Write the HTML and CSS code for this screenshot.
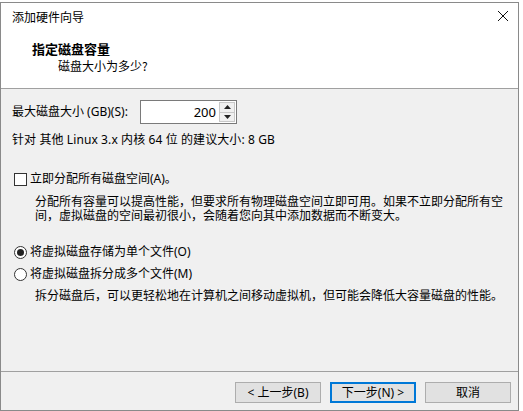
FILE: index.html
```html
<!DOCTYPE html>
<html lang="zh-CN">
<head>
<meta charset="utf-8">
<title>添加硬件向导</title>
<link rel="stylesheet" href="styles.css">
</head>
<body>
<div class="screen">
  <div class="dialog">
    <div class="top">
      <div class="titlebar">
        <span class="title">添加硬件向导</span>
        <svg class="close" width="12" height="12" viewBox="0 0 12 12"><path d="M1 1L11 11M11 1L1 11" stroke="#111" stroke-width="1" fill="none"/></svg>
      </div>
      <div class="header">
        <div class="h-title">指定磁盘容量</div>
        <div class="h-sub">磁盘大小为多少?</div>
      </div>
    </div>
    <div class="body">
      <div class="size-row">
        <span class="label">最大磁盘大小 (GB)(S):</span>
        <div class="spin">
          <span class="spin-value">200</span>
          <div class="spin-btns">
            <div class="spin-btn"><svg width="7" height="4" viewBox="0 0 7 4"><path d="M3.5 0L7 4H0Z" fill="#222"/></svg></div>
            <div class="spin-btn"><svg width="7" height="4" viewBox="0 0 7 4"><path d="M0 0H7L3.5 4Z" fill="#222"/></svg></div>
          </div>
        </div>
      </div>
      <div class="rec">针对 其他 Linux 3.x 内核 64 位 的建议大小: 8 GB</div>
      <div class="check-row">
        <span class="checkbox"></span>
        <span class="opt-label">立即分配所有磁盘空间(A)。</span>
      </div>
      <div class="desc desc-alloc">分配所有容量可以提高性能，但要求所有物理磁盘空间立即可用。如果不立即分配所有空<br>间，虚拟磁盘的空间最初很小，会随着您向其中添加数据而不断变大。</div>
      <div class="radio-row radio-first">
        <span class="radio checked"></span>
        <span class="opt-label">将虚拟磁盘存储为单个文件(O)</span>
      </div>
      <div class="radio-row radio-second">
        <span class="radio"></span>
        <span class="opt-label">将虚拟磁盘拆分成多个文件(M)</span>
      </div>
      <div class="desc desc-split">拆分磁盘后，可以更轻松地在计算机之间移动虚拟机，但可能会降低大容量磁盘的性能。</div>
    </div>
    <div class="footer">
      <button class="btn">&lt; 上一步(B)</button>
      <button class="btn btn-default">下一步(N) &gt;</button>
      <button class="btn btn-cancel">取消</button>
    </div>
  </div>
</div>
</body>
</html>
```
FILE: styles.css
```css
* { box-sizing: border-box; }
html, body {
  margin: 0;
  padding: 0;
  background: #ffffff;
}
body {
  width: 523px;
  height: 411px;
  overflow: hidden;
  font-family: "Noto Sans", "Noto Sans CJK SC", sans-serif;
  font-size: 12px;
  color: #000;
}
.screen {
  padding-top: 2px;
}
.dialog {
  width: 519px;
  height: 409px;
  border: 1px solid #8a8a8a;
  background: #f0f0f0;
  display: flex;
  flex-direction: column;
}
.top {
  background: #ffffff;
  height: 86px;
  border-bottom: 1px solid #a0a0a0;
  flex: none;
}
.titlebar {
  height: 28px;
  display: flex;
  align-items: center;
  justify-content: space-between;
  padding: 0 9px 0 11px;
}
.title {
  line-height: 28px;
  font-family: "Noto Sans CJK SC", sans-serif;
}
.close {
  display: block;
  margin-top: -2px;
}
.header {
  padding: 10px 0 0 31px;
}
.h-title {
  font-family: "Noto Sans CJK SC", sans-serif;
  font-weight: bold;
  font-size: 13px;
  line-height: 16px;
}
.h-sub {
  font-family: "Noto Sans CJK SC", sans-serif;
  line-height: 16px;
  margin-top: 1px;
  padding-left: 26px;
}
.body {
  flex: 1;
  padding: 11px 0 0 11px;
  border-bottom: 1px solid #a0a0a0;
}
.size-row {
  display: flex;
  align-items: center;
  height: 24px;
}
.label {
  line-height: 16px;
  width: 128px;
}
.spin {
  width: 97px;
  height: 24px;
  border: 1px solid #7a7a7a;
  background: #fff;
  display: flex;
  align-items: center;
  justify-content: flex-end;
  padding: 1px 1px 1px 0;
}
.spin-value {
  font-size: 13px;
  line-height: 20px;
  padding-right: 3px;
}
.spin-btns {
  width: 16px;
  height: 20px;
  display: flex;
  flex-direction: column;
}
.spin-btn {
  flex: 1;
  border: 1px solid #c8c8c8;
  background: #f0f0f0;
  display: flex;
  align-items: center;
  justify-content: center;
}
.spin-btn + .spin-btn {
  border-top: none;
}
.rec {
  margin-top: 8px;
  line-height: 16px;
  letter-spacing: 0.1px;
}
.check-row, .radio-row {
  display: flex;
  align-items: center;
  height: 16px;
  padding-left: 2px;
}
.check-row {
  margin-top: 23px;
}
.checkbox {
  width: 13px;
  height: 13px;
  border: 1px solid #333;
  background: #fff;
  flex: none;
}
.opt-label {
  margin-left: 3px;
  line-height: 16px;
}
.desc {
  padding-left: 23px;
  line-height: 14px;
  font-family: "Noto Sans CJK SC", sans-serif;
}
.desc-alloc {
  margin-top: 7px;
}
.radio-first {
  margin-top: 22px;
}
.radio-second {
  margin-top: 6px;
}
.radio {
  width: 13px;
  height: 13px;
  border: 1px solid #333;
  border-radius: 50%;
  background: #fff;
  flex: none;
  display: flex;
  align-items: center;
  justify-content: center;
}
.radio.checked::after {
  content: "";
  width: 7px;
  height: 7px;
  border-radius: 50%;
  background: #222;
}
.desc-split {
  margin-top: 6px;
}
.footer {
  height: 38px;
  flex: none;
  display: flex;
  justify-content: flex-end;
  gap: 9px;
  padding: 10px 7px 0 0;
}
.btn {
  width: 86px;
  height: 21px;
  border: 1px solid #adadad;
  background: #e1e1e1;
  font-family: "Noto Sans", "Noto Sans CJK SC", sans-serif;
  font-size: 12px;
  color: #000;
  padding: 0;
  line-height: 17px;
}
.btn-default {
  border: 2px solid #0078d7;
}
```
